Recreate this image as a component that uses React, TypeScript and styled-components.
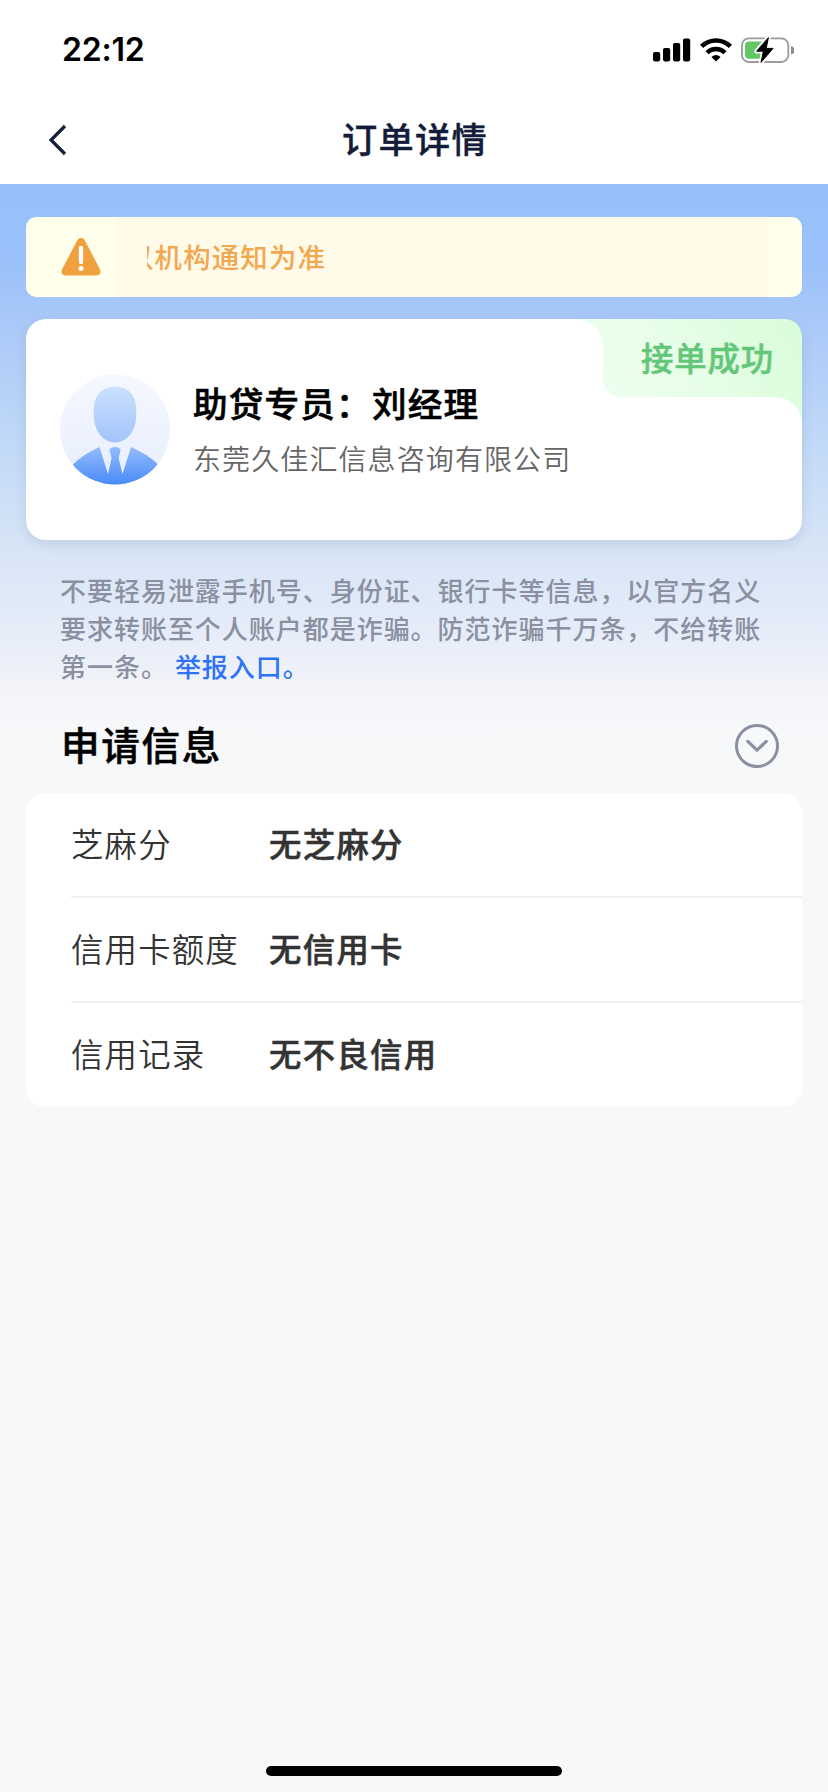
import React from "react";
import styled, { createGlobalStyle } from "styled-components";

const GlobalStyle = createGlobalStyle`
  * { box-sizing: border-box; }
  body {
    margin: 0;
    background: #f6f8fa;
    font-family: "Noto Sans CJK SC", sans-serif;
  }
`;

const Screen = styled.div`
  display: flex;
  flex-direction: column;
  width: 828px;
  height: 1792px;
  overflow: hidden;
  background: #f6f8fa;
`;

const StatusBar = styled.div`
  display: flex;
  align-items: center;
  justify-content: space-between;
  height: 96px;
  padding: 3px 34px 0 62px;
  background: #fff;
`;

const Clock = styled.span`
  padding-top: 1px;
  font: 600 32px/40px Inter, sans-serif;
  letter-spacing: -0.2px;
  color: #000;
`;

const StatusIcons = styled.div`
  display: flex;
  align-items: center;
  gap: 9px;
  svg { display: block; }
`;

const NavBar = styled.header`
  display: grid;
  grid-template-columns: 120px 1fr 120px;
  align-items: center;
  height: 88px;
  background: #fff;
`;

const BackButton = styled.button`
  display: flex;
  padding: 0 0 0 47px;
  border: 0;
  background: none;
`;

const Title = styled.h1`
  margin: 0;
  padding: 0 0 5px 2px;
  text-align: center;
  font-size: 35.2px;
  font-weight: 500;
  line-height: 50px;
  letter-spacing: 1.3px;
  -webkit-text-stroke: 0.4px currentColor;
  color: #131c38;
`;

const Content = styled.main`
  flex: 1;
  display: flex;
  flex-direction: column;
  padding: 33px 26px 0;
  background: linear-gradient(
    180deg,
    #97c0fa 0,
    #9ac1fa 80px,
    #abc9f8 140px,
    #bfd8f8 250px,
    #d8e5f6 366px,
    #dfe9f8 410px,
    #ebeff9 475px,
    #f4f5f8 510px,
    #f6f8fa 550px
  );
`;

const Notice = styled.section`
  display: flex;
  align-items: stretch;
  height: 80px;
  border-radius: 10px;
  overflow: hidden;
  background: #ffffec;
`;

const NoticeIcon = styled.div`
  display: flex;
  align-items: center;
  width: 90px;
  padding: 0 0 1px 34px;
`;

const Marquee = styled.div`
  flex: 1;
  display: flex;
  align-items: center;
  margin-right: 34px;
  padding: 0 0 3px 31px;
  background: #fffbe8;
`;

const MarqueeWindow = styled.div`
  flex: 1;
  overflow: hidden;
`;

const MarqueeText = styled.div`
  margin-left: -21px;
  font-size: 27.4px;
  font-weight: 500;
  line-height: 40px;
  letter-spacing: 1.2px;
  white-space: nowrap;
  color: #f2a750;
`;

const AgentCard = styled.section`
  position: relative;
  display: flex;
  gap: 22px;
  height: 221px;
  margin-top: 22px;
  padding: 55px 34px 0;
  border-radius: 20px;
  background: #fff;
  box-shadow: 0 4px 12px rgba(90, 110, 140, 0.18);
`;

const AgentText = styled.div`
  display: flex;
  flex-direction: column;
`;

const AgentName = styled.h2`
  margin: 2px 0 0;
  font-size: 34.6px;
  font-weight: 500;
  line-height: 52px;
  letter-spacing: 1.2px;
  -webkit-text-stroke: 0.6px currentColor;
  color: #000;
`;

const AgentCompany = styled.p`
  margin: 9px 0 0;
  font-size: 28px;
  font-weight: 350;
  line-height: 42px;
  letter-spacing: 1.1px;
  color: #666;
`;

const StatusBadge = styled.div`
  position: absolute;
  top: 0;
  right: 0;
  width: 228px;
  height: 106px;
  padding: 14px 0 0 67px;
  svg { position: absolute; inset: 0; }
  span {
    position: relative;
    font-size: 32.4px;
    font-weight: 500;
    line-height: 48px;
    letter-spacing: 0.9px;
    white-space: nowrap;
    -webkit-text-stroke: 0.5px currentColor;
    color: #63c779;
  }
`;

const Warning = styled.p`
  width: 720px;
  margin: 31px 0 0 34px;
  font-size: 26px;
  font-weight: 500;
  line-height: 38px;
  letter-spacing: 0.97px;
  color: #8a90a0;
`;

const ReportLink = styled.a`
  margin-left: 7px;
  color: #2c73f6;
`;

const SectionHead = styled.div`
  display: flex;
  align-items: center;
  justify-content: space-between;
  height: 60px;
  margin: 31px 23px 0 35px;
`;

const SectionTitle = styled.h2`
  margin: 0;
  padding-bottom: 7px;
  font-size: 38.6px;
  font-weight: 500;
  line-height: 58px;
  letter-spacing: 1.7px;
  -webkit-text-stroke: 0.5px currentColor;
  color: #000;
`;

const InfoCard = styled.dl`
  margin: 17px 0 0;
  padding-left: 45px;
  border-radius: 20px;
  background: #fff;
`;

const InfoRow = styled.div`
  display: flex;
  align-items: center;
  height: 105px;
  padding-bottom: 4px;
  border-bottom: 2px solid #f1f1f1;
  &:last-child { height: 104px; padding-bottom: 5px; border-bottom: 0; }
`;

const InfoLabel = styled.dt`
  width: 198px;
  font-size: 32.4px;
  font-weight: 350;
  line-height: 48px;
  letter-spacing: 1.2px;
  color: #333;
`;

const InfoValue = styled.dd`
  margin: 0;
  font-size: 32.4px;
  font-weight: 500;
  line-height: 48px;
  letter-spacing: 1.3px;
  -webkit-text-stroke: 0.5px currentColor;
  color: #333;
`;

const HomeIndicator = styled.div`
  width: 296px;
  height: 10px;
  margin: auto auto 16px;
  border-radius: 5px;
  background: #000;
`;

const SignalIcon = () => (
  <svg width="38" height="24" viewBox="0 0 38 24">
    <rect x="0" y="14" width="7.2" height="9.4" rx="1.8" />
    <rect x="10" y="10" width="7.2" height="13.4" rx="1.8" />
    <rect x="20" y="5" width="7.2" height="18.4" rx="1.8" />
    <rect x="30" y="0.4" width="7.2" height="23" rx="1.8" />
  </svg>
);

const WifiIcon = () => (
  <svg width="32" height="24" viewBox="0 0 32 24">
    <g fill="none" stroke="#000" strokeWidth="4.6">
      <path d="M1.6 8.4A20.4 20.4 0 0 1 30.4 8.4" />
      <path d="M7 14.6A13 13 0 0 1 25 14.6" />
    </g>
    <path d="M16 23.4L11.4 18.9Q16 15.2 20.6 18.9Z" />
  </svg>
);

const BatteryIcon = () => (
  <svg width="53" height="28" viewBox="0 0 53 28">
    <rect x="0.9" y="2.4" width="46.4" height="23.6" rx="7" fill="none" stroke="#9b9b9b" strokeWidth="1.8" />
    <path d="M50 10a4.4 4.4 0 0 1 0 8.6z" fill="#8c8c8c" />
    <path d="M8 5.6H21V22.8H8Q4 22.8 4 18.8V9.6Q4 5.6 8 5.6Z" fill="#62c664" />
    <path
      d="M27.4 1.4L15.6 15.2H22.4L20 26.6L32 12.4H25.2Z"
      stroke="#fff"
      strokeWidth="4.5"
      strokeLinejoin="round"
      fill="#fff"
    />
    <path d="M27.4 1.6L15.6 15.2H22.4L20 26.4L32 12.4H25.2Z" stroke="#000" strokeWidth="1" strokeLinejoin="round" />
  </svg>
);

const BackIcon = () => (
  <svg width="20" height="32" viewBox="0 0 20 32">
    <path d="M18 2L4 16L18 30" fill="none" stroke="#131c38" strokeWidth="3.2" />
  </svg>
);

const AlertIcon = () => (
  <svg width="42" height="40" viewBox="0 0 42 40">
    <path
      d="M17.4 3Q21 -1.6 24.6 3L40 32.4Q42 38 36.6 38.4H5.4Q0 38 2 32.4Z"
      fill="#f0a03c"
    />
    <path d="M21 11V25" stroke="#fff" strokeWidth="4.4" strokeLinecap="round" />
    <circle cx="21" cy="31.4" r="2.5" fill="#fff" />
  </svg>
);

const Avatar = () => (
  <svg width="111" height="111" viewBox="0 0 111 111">
    <defs>
      <linearGradient id="disc" x1="0" y1="0" x2="0" y2="1">
        <stop offset="0" stopColor="#f6f8fe" />
        <stop offset="1" stopColor="#e6edfe" />
      </linearGradient>
      <linearGradient id="head" x1="0" y1="0" x2="0" y2="1">
        <stop offset="0" stopColor="#cae0fd" />
        <stop offset="1" stopColor="#a3c5fa" />
      </linearGradient>
      <linearGradient id="suit" x1="0" y1="0" x2="0" y2="1">
        <stop offset="0" stopColor="#94bbfb" />
        <stop offset="1" stopColor="#478bf9" />
      </linearGradient>
      <clipPath id="round">
        <circle cx="55" cy="55.5" r="55" />
      </clipPath>
    </defs>
    <g clipPath="url(#round)">
      <rect width="111" height="111" fill="url(#disc)" />
      <path
        d="M33.8 36C33.8 21 42 12.8 55 12.8S76.2 21 76.2 36V41C76.2 57 67 68.4 55 68.4S33.8 57 33.8 41Z"
        fill="url(#head)"
      />
      <path
        d="M39.5 73Q22 81 13 90.5V111H98V90.5Q89 81 71 73L62.5 100L58.6 84L60.6 76Q59.5 73 55 73T49.4 76L51.6 84L48 100Z"
        fill="url(#suit)"
      />
    </g>
  </svg>
);

const BadgeShape = () => (
  <svg width="228" height="106" viewBox="0 0 228 106">
    <defs>
      <linearGradient id="mint" x1="0" y1="0.6" x2="1" y2="0.3">
        <stop offset="0" stopColor="#eefff0" />
        <stop offset="0.45" stopColor="#e8fee9" />
        <stop offset="1" stopColor="#dbfcda" />
      </linearGradient>
    </defs>
    <path
      d="M0 0H208Q228 0 228 20V106C228 90 217 78 200 78H49Q29 78 29 58V28C29 12 16 0 0 0Z"
      fill="url(#mint)"
    />
  </svg>
);

const ExpandIcon = () => (
  <svg width="44" height="44" viewBox="0 0 44 44" fill="none" stroke="#8a90a2">
    <circle cx="22" cy="22" r="20.5" strokeWidth="3" />
    <path d="M12.8 17.4L22 26.2L31.2 17.4" strokeWidth="3.2" strokeLinecap="round" strokeLinejoin="round" />
  </svg>
);

const details = [
  { label: "芝麻分", value: "无芝麻分" },
  { label: "信用卡额度", value: "无信用卡" },
  { label: "信用记录", value: "无不良信用" },
];

export default function App() {
  return (
    <Screen>
      <GlobalStyle />
      <StatusBar>
        <Clock>22:12</Clock>
        <StatusIcons>
          <SignalIcon />
          <WifiIcon />
          <BatteryIcon />
        </StatusIcons>
      </StatusBar>
      <NavBar>
        <BackButton aria-label="返回">
          <BackIcon />
        </BackButton>
        <Title>订单详情</Title>
      </NavBar>
      <Content>
        <Notice>
          <NoticeIcon>
            <AlertIcon />
          </NoticeIcon>
          <Marquee>
            <MarqueeWindow>
              <MarqueeText>以机构通知为准</MarqueeText>
            </MarqueeWindow>
          </Marquee>
        </Notice>
        <AgentCard>
          <Avatar />
          <AgentText>
            <AgentName>助贷专员：刘经理</AgentName>
            <AgentCompany>东莞久佳汇信息咨询有限公司</AgentCompany>
          </AgentText>
          <StatusBadge>
            <BadgeShape />
            <span>接单成功</span>
          </StatusBadge>
        </AgentCard>
        <Warning>
          不要轻易泄露手机号、身份证、银行卡等信息，以官方名义要求转账至个人账户都是诈骗。防范诈骗千万条，不给转账第一条。
          <ReportLink>举报入口。</ReportLink>
        </Warning>
        <SectionHead>
          <SectionTitle>申请信息</SectionTitle>
          <ExpandIcon />
        </SectionHead>
        <InfoCard>
          {details.map((item) => (
            <InfoRow key={item.label}>
              <InfoLabel>{item.label}</InfoLabel>
              <InfoValue>{item.value}</InfoValue>
            </InfoRow>
          ))}
        </InfoCard>
        <HomeIndicator />
      </Content>
    </Screen>
  );
}
